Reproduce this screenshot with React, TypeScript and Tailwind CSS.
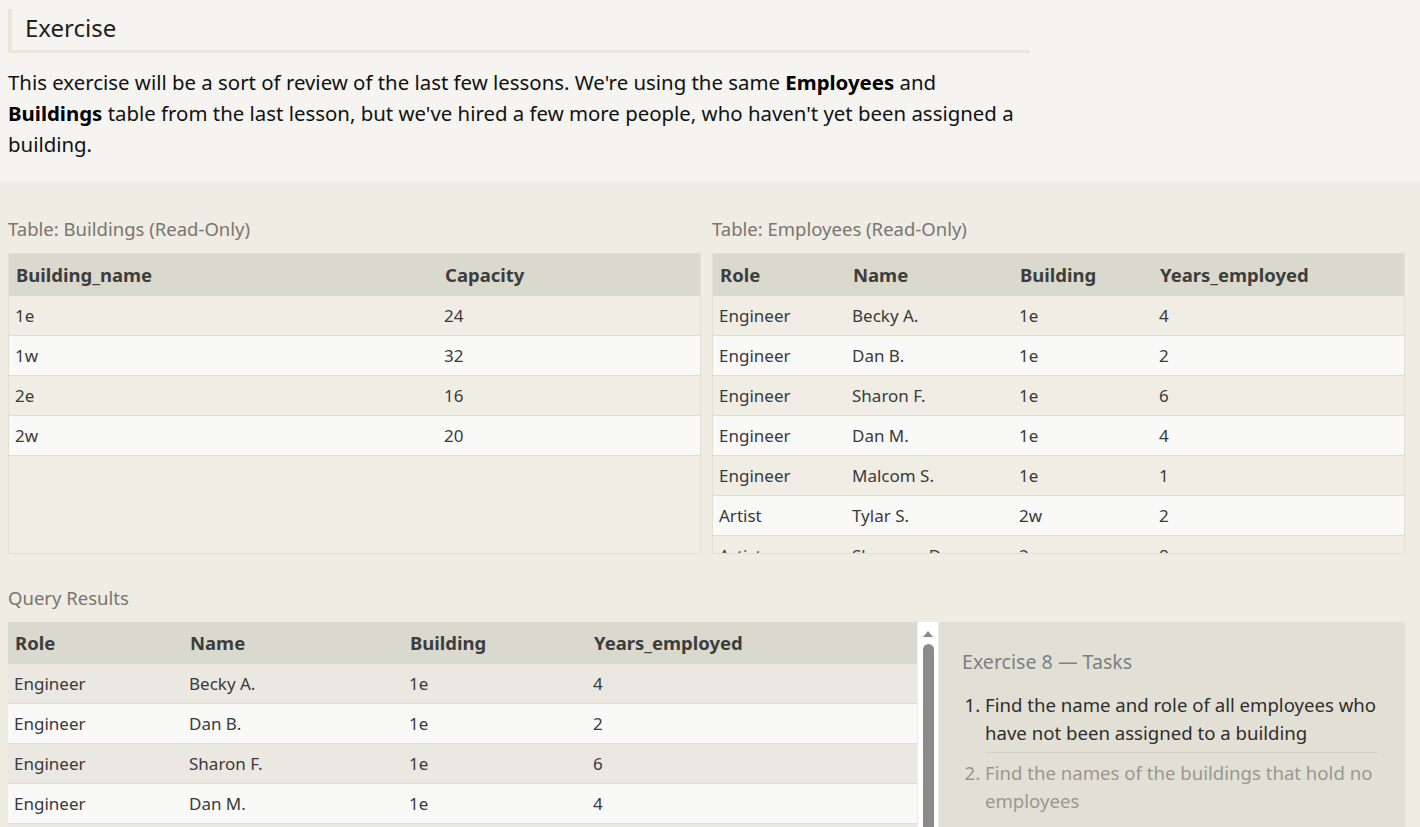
import React from "react";

type Row = string[];

const buildings: Row[] = [
  ["1e", "24"],
  ["1w", "32"],
  ["2e", "16"],
  ["2w", "20"],
];

const employees: Row[] = [
  ["Engineer", "Becky A.", "1e", "4"],
  ["Engineer", "Dan B.", "1e", "2"],
  ["Engineer", "Sharon F.", "1e", "6"],
  ["Engineer", "Dan M.", "1e", "4"],
  ["Engineer", "Malcom S.", "1e", "1"],
  ["Artist", "Tylar S.", "2w", "2"],
  ["Artist", "Sherman D.", "2w", "8"],
  ["Artist", "Jakob J.", "2w", "6"],
  ["Artist", "Lillia A.", "2w", "7"],
];

function DataTable({
  headers,
  rows,
  cols,
  oddBg,
}: {
  headers: string[];
  rows: Row[];
  cols: string;
  oddBg: string;
}) {
  return (
    <div>
      <div className={`grid h-[42px] items-center bg-[#dad9cd] ${cols}`}>
        {headers.map((h) => (
          <div key={h} className="pl-[7px] text-[18.5px] font-bold text-[#3d3d3d]">
            {h}
          </div>
        ))}
      </div>
      {rows.map((row, i) => (
        <div
          key={i}
          className={`grid h-10 items-center border-b border-[#e0ddd5] ${cols} ${i % 2 === 0 ? oddBg : "bg-[#f9f9f8]"}`}
        >
          {row.map((cell, j) => (
            <div key={j} className="pl-[6px] pt-px text-[17px] text-[#3a3a3a]">
              {cell}
            </div>
          ))}
        </div>
      ))}
    </div>
  );
}

export default function App() {
  return (
    <div className="h-[827px] overflow-hidden bg-[#efece4] font-['Noto_Sans',sans-serif]">
      <div className="bg-[#f5f4f0] pb-[21px] pl-2 pt-[9px]">
        <h2 className="flex h-[44px] w-[1022px] items-center border-b-[3px] border-l-4 border-[#e8e6da] pb-[3px] pl-[13px] text-[24px] text-[#1f1f1f]">
          Exercise
        </h2>
        <p className="mt-[14px] w-[1022px] text-[20.4px] leading-[31px] text-[#111]">
          This exercise will be a sort of review of the last few lessons. We're using the same{" "}
          <b className="text-black">Employees</b> and
          <br />
          <b className="text-black">Buildings</b> table from the last lesson, but we've hired a few more people, who
          haven't yet been assigned a
          <br />
          building.
        </p>
      </div>

      <div className="pl-2 pr-[15px]">
        <div className="grid grid-cols-2 gap-[11px] pt-9">
          <div>
            <div className="mb-3 text-[18.5px] leading-6 text-[#7a756f]">Table: Buildings (Read-Only)</div>
            <div className="h-[301px] overflow-hidden border border-[#e2dfd6] bg-[#f0ede5]">
              <DataTable
                headers={["Building_name", "Capacity"]}
                rows={buildings}
                cols="grid-cols-[429px_1fr]"
                oddBg="bg-[#f0ede5]"
              />
            </div>
          </div>
          <div>
            <div className="mb-3 text-[18.5px] leading-6 text-[#7a756f]">Table: Employees (Read-Only)</div>
            <div className="h-[301px] overflow-hidden border border-[#e2dfd6] bg-[#f0ede5]">
              <DataTable
                headers={["Role", "Name", "Building", "Years_employed"]}
                rows={employees}
                cols="grid-cols-[133px_167px_140px_1fr]"
                oddBg="bg-[#f0ede5]"
              />
            </div>
          </div>
        </div>

        <div className="mt-8 mb-3 text-[18.5px] leading-6 text-[#7a756f]">Query Results</div>
        <div className="flex h-[300px] gap-px">
          <div className="w-[909px] overflow-hidden">
            <DataTable
              headers={["Role", "Name", "Building", "Years_employed"]}
              rows={employees}
              cols="grid-cols-[175px_220px_184px_1fr]"
              oddBg="bg-[#eae8e0]"
            />
          </div>
          <div className="flex w-5 flex-col items-center bg-white pt-[9px]">
            <div className="h-0 w-0 border-x-[5px] border-b-[6px] border-x-transparent border-b-[#8a8a8a]" />
            <div className="mt-[7px] h-[260px] w-[11px] rounded-t-full bg-[#8b8b8b]" />
          </div>
          <div className="flex-1 bg-[#e2e0d5] pl-[23px] pr-[28px] pt-[26px]">
            <div className="text-[19.6px] leading-7 text-[#7b7f88]">Exercise 8 — Tasks</div>
            <ol className="mt-[15px] list-decimal pl-[23px] text-[18.6px] leading-7">
              <li className="border-b border-[#d3d0c5] pb-[5px] text-[#2e2e2e]">
                Find the name and role of all employees who have not been assigned to a building
              </li>
              <li className="pt-[6px] text-[#9a9790]">Find the names of the buildings that hold no employees</li>
            </ol>
          </div>
        </div>
      </div>
    </div>
  );
}
